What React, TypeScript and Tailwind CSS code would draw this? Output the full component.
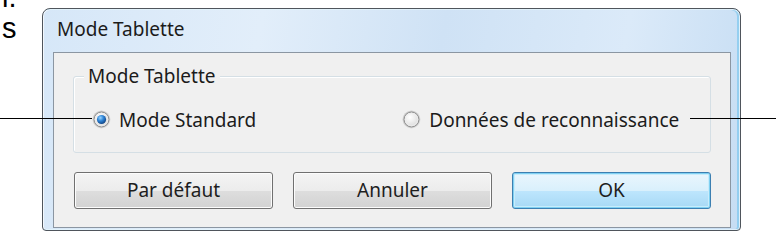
function Radio({ checked }: { checked?: boolean }) {
  return (
    <svg width="19" height="19" viewBox="0 0 19 19" className="shrink-0">
      <defs>
        <linearGradient id="ring" x1="0" y1="0" x2="1" y2="1">
          <stop offset="0" stopColor="#a9a9a9" />
          <stop offset="1" stopColor="#d9d9d9" />
        </linearGradient>
        <radialGradient id="face" cx="0.4" cy="0.35" r="0.75">
          <stop offset="0" stopColor="#ffffff" />
          <stop offset="1" stopColor="#d6d6d6" />
        </radialGradient>
        <radialGradient id="dot" cx="0.38" cy="0.32" r="0.75">
          <stop offset="0" stopColor="#9ad6ff" />
          <stop offset="0.45" stopColor="#2f84d6" />
          <stop offset="1" stopColor="#0b3a78" />
        </radialGradient>
      </defs>
      <circle cx="9.5" cy="9.5" r="9" fill="url(#ring)" opacity="0.55" />
      <circle cx="9.5" cy="9.5" r="7.5" fill="url(#face)" stroke="#8c8c8c" strokeWidth="1" />
      <circle cx="9.5" cy="9.5" r="6.2" fill="none" stroke="#ececec" strokeWidth="0.8" />
      {checked && <circle cx="9.5" cy="9.5" r="4.6" fill="url(#dot)" />}
    </svg>
  );
}

function Button({ label, primary }: { label: string; primary?: boolean }) {
  return (
    <button
      className={
        primary
          ? "h-[37px] w-[199px] rounded-[3px] border border-[#3c7fb1] bg-[linear-gradient(to_bottom,#eaf6fd_0%,#d9f0fc_50%,#bee6fd_50%,#a7d9f5_100%)] shadow-[inset_0_0_0_1px_#7fd0f2,inset_0_0_0_2px_#c8ecfb] text-[19px] text-[#1e1e1e]"
          : "h-[37px] w-[199px] rounded-[3px] border border-[#707070] bg-[linear-gradient(to_bottom,#f4f4f4_0%,#ececec_50%,#dedede_50%,#d2d2d2_100%)] shadow-[inset_0_0_0_1px_#fcfcfc] text-[19px] text-[#1e1e1e]"
      }
    >
      {label}
    </button>
  );
}

export default function App() {
  return (
    <div className="relative flex h-[242px] w-[776px] overflow-hidden bg-white font-['Noto_Sans',sans-serif]">
      <div className="-mt-[18px] w-[42px] pl-[2px] font-['Liberation_Sans',sans-serif] text-[29px] leading-[31px] text-black">
        <div>l.</div>
        <div>s</div>
      </div>

      <div className="mt-[8px] flex h-[223px] w-[699px] flex-col rounded-t-[8px] rounded-b-[4px] border border-[#4f555c] bg-[linear-gradient(100deg,#d6e7f8_0%,#e2eefa_30%,#cfe2f5_55%,#dbeaf9_80%,#c6ddf3_100%)] pb-[2px] pl-[10px] pr-[9px] shadow-[inset_0_0_0_1px_rgba(255,255,255,0.7),inset_-2px_0_0_1px_rgba(96,190,236,0.5)]">
        <div className="h-[43px] pl-[4px] pt-[9px] text-[19px] leading-[22px] text-[#1b1b1b]">
          Mode Tablette
        </div>

        <div className="flex flex-1 flex-col border border-[#8b96a2] bg-[#f0f0f0] px-[19px] pt-[23px]">
          <div className="relative flex h-[77px] items-center rounded-[3px] border border-[#d5dfe5] shadow-[inset_1px_1px_0_#fff]">
            <div className="absolute -top-[12px] left-[10px] bg-[#f0f0f0] px-[4px] text-[19px] leading-[22px] text-[#1b1b1b]">
              Mode Tablette
            </div>
            <div className="mt-[10px] flex w-full items-center text-[19px] leading-[22px] text-[#1b1b1b]">
              <label className="ml-[18px] flex items-center gap-[8px]">
                <Radio checked />
                Mode Standard
              </label>
              <label className="ml-[146px] flex items-center gap-[8px]">
                <Radio />
                Données de reconnaissance
              </label>
            </div>
          </div>

          <div className="mt-[19px] flex gap-[20px] pl-[1px]">
            <Button label="Par défaut" />
            <Button label="Annuler" />
            <Button label="OK" primary />
          </div>
        </div>
      </div>

      <div className="absolute left-0 top-[118px] h-px w-[92px] bg-black" />
      <div className="absolute left-[690px] top-[118px] h-px w-[86px] bg-black" />
    </div>
  );
}
